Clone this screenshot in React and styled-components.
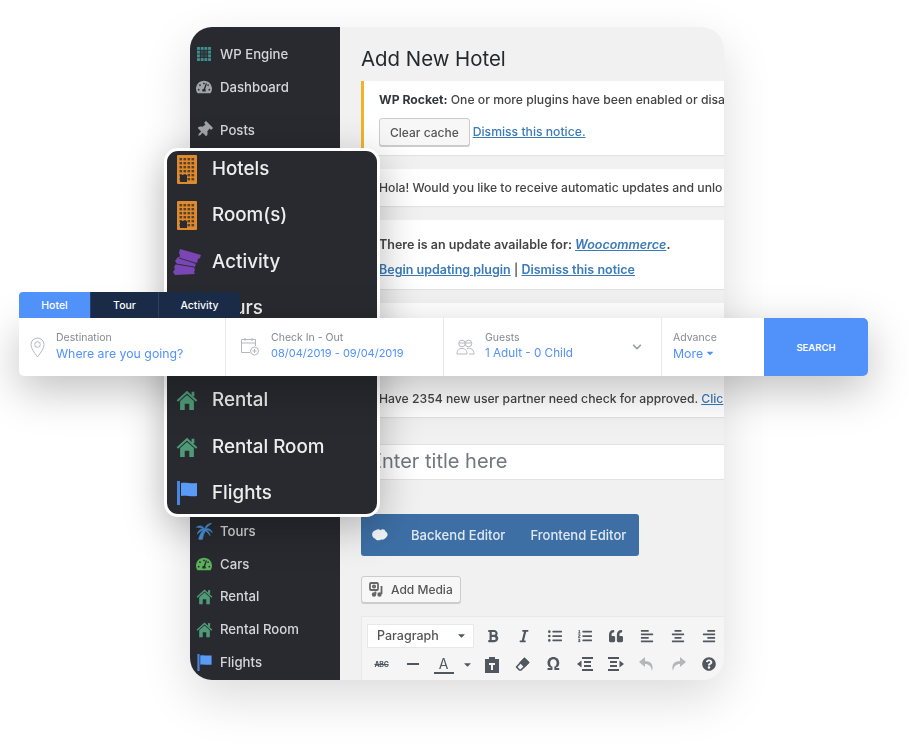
import React from 'react';
import styled, { createGlobalStyle } from 'styled-components';
import {
  FaBold,
  FaItalic,
  FaListUl,
  FaListOl,
  FaQuoteLeft,
  FaAlignLeft,
  FaAlignCenter,
  FaAlignRight,
  FaCaretDown,
  FaQuestionCircle,
  FaTachometerAlt,
  FaThumbtack,
  FaChevronDown,
} from 'react-icons/fa';

const GlobalStyle = createGlobalStyle`
  html, body {
    margin: 0;
    padding: 0;
    background: #fff;
  }
  body {
    font-family: Inter, "Liberation Sans", sans-serif;
  }
`;

const Page = styled.div`
  position: relative;
  width: 909px;
  height: 752px;
  overflow: hidden;
  background: #fff;
  padding: 27px 0 0 190px;
  box-sizing: border-box;
`;

const Screen = styled.div`
  display: flex;
  width: 534px;
  height: 653px;
  border-radius: 22px;
  overflow: hidden;
  box-shadow: 0 18px 50px rgba(0, 0, 0, 0.14);
  filter: blur(0.45px);
`;

const Sidebar = styled.nav`
  display: flex;
  flex-direction: column;
  flex: 0 0 150px;
  background: #282a2f;
  padding: 10.6px 0 1.6px 4px;
  box-sizing: border-box;
`;

const SideGroup = styled.div`
  margin-top: ${(props) => props.$top || '0'};
`;

const SideRow = styled.div`
  display: flex;
  align-items: center;
  gap: 6px;
  height: 32.8px;
  font-size: 13.2px;
  font-weight: 500;
  color: #d4d6d9;
`;

const SideIcon = styled.span`
  display: flex;
  align-items: center;
  justify-content: center;
  width: 20px;
  height: 20px;
  color: ${(props) => props.$color || '#a0a5aa'};
  font-size: 16px;
`;

const Main = styled.main`
  flex: 1;
  min-width: 0;
  background: #f1f1f1;
  padding: 17px 0 0 21px;
  overflow: hidden;
`;

const Title = styled.h1`
  margin: 0 0 7px;
  font-size: 20.4px;
  line-height: 30px;
  font-weight: 400;
  color: #23282d;
  white-space: nowrap;
`;

const Notice = styled.div`
  display: flex;
  flex-direction: column;
  justify-content: ${(props) => (props.$end ? 'flex-end' : 'center')};
  gap: ${(props) => props.$gap || 8}px;
  height: ${(props) => props.$h}px;
  margin-bottom: 14px;
  padding: ${(props) => props.$pt || 0}px 0 ${(props) => (props.$end ? 8 : 0)}px ${(props) => (props.$warn ? 15 : 18)}px;
  box-sizing: border-box;
  background: #fff;
  border-left: ${(props) => (props.$warn ? '3px solid #f0b429' : '0')};
  box-shadow: 0 1px 1px rgba(0, 0, 0, 0.06);
  font-size: 12.2px;
  line-height: 20px;
  font-weight: 500;
  color: #444;
  white-space: nowrap;
  overflow: hidden;
`;

const NoticeLine = styled.div`
  display: flex;
  align-items: center;
  gap: 3px;
  font-weight: ${(props) => (props.$strong ? 600 : 500)};
  font-size: ${(props) => (props.$strong ? '12.5px' : 'inherit')};
`;

const NoticeLink = styled.a`
  color: #3a7ab8;
  text-decoration: underline;
  font-weight: ${(props) => (props.$bold ? 600 : 500)};
  font-size: ${(props) => (props.$bold ? '12.5px' : 'inherit')};
  font-style: ${(props) => (props.$italic ? 'italic' : 'normal')};
`;

const Strong = styled.strong`
  font-weight: 700;
  color: #32373c;
`;

const WpButton = styled.button`
  display: inline-flex;
  align-items: center;
  gap: 7px;
  height: ${(props) => props.$h || 28}px;
  padding: 0 ${(props) => props.$pad || 10}px;
  background: #f7f7f7;
  border: 1px solid #cccccc;
  border-radius: 3px;
  box-shadow: 0 1px 0 #cccccc;
  font: 500 12px Inter, sans-serif;
  color: #555;
`;

const TitleField = styled.div`
  height: 34px;
  margin: 27px 0 34px;
  padding-left: 8px;
  background: #fff;
  border: 1px solid #e2e2e2;
  border-right: 0;
  font-size: 20px;
  line-height: 33px;
  color: #72777c;
`;

const EditorTabs = styled.div`
  display: flex;
  align-items: center;
  width: 278px;
  height: 42px;
  margin-bottom: 20px;
  padding-left: 11px;
  box-sizing: border-box;
  background: #3d6fa5;
  border-radius: 3px;
  font-size: 13.1px;
  font-weight: 500;
  color: #dfe8f2;
`;

const EditorTab = styled.span`
  margin-left: ${(props) => props.$gap}px;
`;

const Toolbar = styled.div`
  height: 64px;
  margin-top: 13px;
  padding: 4px 0 0 4px;
  box-sizing: border-box;
  background: #f5f5f5;
  border-top: 1px solid #e8e8e8;
  border-left: 1px solid #e8e8e8;
  border-radius: 0 0 20px 0;
`;

const ToolRow = styled.div`
  display: flex;
  align-items: center;
  height: ${(props) => props.$h}px;
`;

const Select = styled.div`
  display: flex;
  align-items: center;
  justify-content: space-between;
  width: 108px;
  height: 24px;
  margin-left: 1px;
  margin-right: 3px;
  padding: 0 6px 0 9px;
  box-sizing: border-box;
  background: #fff;
  border: 1px solid #e8e8e8;
  font-size: 12.5px;
  font-weight: 500;
  color: #555;
`;

const Tool = styled.span`
  display: flex;
  align-items: center;
  justify-content: center;
  width: ${(props) => props.$w || 31}px;
  font-size: ${(props) => props.$size || 14}px;
  font-weight: ${(props) => (props.$bold ? 700 : 400)};
  color: ${(props) => props.$color || '#50575e'};
`;

const TinyText = styled.span`
  font-size: 7px;
  font-weight: 700;
  letter-spacing: -0.3px;
  text-decoration: line-through;
`;

const HrLine = styled.span`
  width: 12px;
  height: 2px;
  background: #50575e;
`;

const ColorA = styled.span`
  width: 20px;
  border-bottom: 2px solid #50575e;
  text-align: center;
  font-size: 14px;
  line-height: 17px;
`;

const FloatMenu = styled.div`
  position: absolute;
  left: 164px;
  top: 148px;
  width: 216px;
  height: 369px;
  box-sizing: border-box;
  background: #282a2f;
  border: 3px solid #fff;
  border-radius: 14px;
  box-shadow: 0 10px 40px rgba(0, 0, 0, 0.28);
  overflow: hidden;
`;

const FloatRow = styled.div`
  display: flex;
  align-items: flex-start;
  gap: 10px;
  height: 46.3px;
  padding: 4px 0 0 5px;
  box-sizing: border-box;
  font-size: 18.8px;
  line-height: 28px;
  font-weight: 500;
  color: #eceded;
  filter: blur(0.35px);
`;

const FloatIcon = styled.span`
  display: flex;
  align-items: center;
  justify-content: center;
  width: 30px;
  height: 28px;
`;

const SearchBox = styled.div`
  position: absolute;
  left: 19px;
  top: 292px;
  width: 849px;
  filter: blur(0.25px);
`;

const Tabs = styled.div`
  display: flex;
  width: 221px;
  height: 26px;
  border-radius: 4px 4px 0 0;
  overflow: hidden;
`;

const TabItem = styled.div`
  display: flex;
  align-items: center;
  justify-content: center;
  width: ${(props) => props.$w}px;
  background: ${(props) => (props.$active ? '#5191fa' : '#1a2b48')};
  border-left: ${(props) => (props.$active ? '0' : '1px solid #2b3f60')};
  box-sizing: border-box;
  font-size: 10.5px;
  font-weight: 500;
  color: #fff;
`;

const Form = styled.div`
  display: flex;
  height: 58px;
  background: #fff;
  border-radius: 0 0 5px 5px;
  box-shadow: 0 14px 44px rgba(0, 0, 0, 0.25);
`;

const Field = styled.div`
  position: relative;
  display: flex;
  align-items: center;
  gap: ${(props) => props.$gap}px;
  width: ${(props) => props.$w}px;
  padding-left: ${(props) => props.$pad}px;
  box-sizing: border-box;
  border-right: ${(props) => (props.$last ? '0' : '1px solid #e8e8e8')};
`;

const FieldText = styled.div`
  display: flex;
  flex-direction: column;
  padding-bottom: 2px;
  white-space: nowrap;
`;

const FieldLabel = styled.span`
  font-size: 10.5px;
  line-height: 14px;
  color: #858a91;
`;

const FieldValue = styled.span`
  display: flex;
  align-items: center;
  gap: 2px;
  font-size: ${(props) => props.$size || 12.3}px;
  line-height: 17px;
  color: #5191fa;
`;

const FieldChevron = styled.span`
  position: absolute;
  right: 19px;
  top: 24px;
  font-size: 10px;
  line-height: 10px;
  color: #9a9fa6;
`;

const SearchButton = styled.button`
  flex: 1;
  border: 0;
  background: #5191fa;
  border-radius: 0 5px 5px 0;
  font: 600 9.5px Inter, sans-serif;
  color: #fff;
`;

const Building = () => (
  <svg width="20" height="29" viewBox="0 0 20 29">
    <rect width="20" height="29" rx="1" fill="#e08a2e" />
    {[3, 7, 11, 15, 19, 23].map((y) =>
      [2.5, 6.5, 10.5, 14.5].map((x) => (
        <rect key={`${x}-${y}`} x={x} y={y} width="2.6" height="2.4" fill="#5a4128" />
      ))
    )}
    <rect x="3" y="20" width="7" height="7" fill="#2a2c31" />
  </svg>
);

const Tickets = () => (
  <svg width="28" height="26" viewBox="0 0 28 26" fill="#7a45b5">
    <path d="M7 0l21 6-1 3-2 1-1 4L6 9l1-3-1-2z" />
    <path d="M5 8l18 6-1 4L4 15l-2-3z" />
    <path d="M3 15l18 3 1 3-1 2 1 2-20 1-2-3 2-3-1-2z" />
    <path d="M6 9l17 5.500M3 15l18 3" stroke="#282a2f" strokeWidth="0.8" fill="none" />
  </svg>
);

const House = ({ size = 22 }) => (
  <svg width={size} height={size} viewBox="0 0 24 24" fill="#4f9b78">
    <path d="M4.500 13 12 6.500l7.500 6.500v10h-5v-7h-5v7h-5z" />
    <path d="M1.500 13 12 3.500 22.500 13" fill="none" stroke="#4f9b78" strokeWidth="2.200" />
    <rect x="17" y="3" width="3" height="5" />
  </svg>
);

const Flag = ({ w = 20, h = 24 }) => (
  <svg width={w} height={h} viewBox="0 0 20 24">
    <rect x="0" y="0" width="3" height="24" fill="#4a86e0" />
    <path d="M4 2c5-1 10 1 16 0v13c-6 1-11-1-16 0z" fill="#5a9bf5" />
  </svg>
);

const Palm = ({ size = 18 }) => (
  <svg width={size} height={size} viewBox="0 0 24 24" fill="#4a90d9" stroke="#4a90d9" strokeWidth="1" strokeLinejoin="round">
    <path d="M5 23c1-5 3-9 7-13l2.500 1c-3 4-4 8-4.500 12z" />
    <path d="M13 10C11 5 6 4 2 7c3-.500 7 .500 11 3z" />
    <path d="M13 10c-4-2-8 0-10 6 3-3 6-5 10-5z" />
    <path d="M13 10c1-5 4-8 9-8-3 2-6 4-8 8z" />
    <path d="M13 10c4-2 8-1 10 4-3-3-6-4-10-3z" />
    <path d="M14 11c3 0 5 3 6 7-2-3-4-5-6-6z" />
  </svg>
);

const WpEngine = () => (
  <svg width="14" height="14" viewBox="0 0 14 14" fill="#3f8f92">
    {[0, 3.700, 7.400, 11.100].map((y) =>
      [0, 3.700, 7.400, 11.100].map((x) => (
        <rect
          key={`${x}-${y}`}
          x={x}
          y={y}
          width="2.900"
          height="2.900"
          opacity={x > 0 && x < 11 && y > 0 && y < 11 ? 0.35 : 1}
        />
      ))
    )}
  </svg>
);

const PinIcon = () => (
  <svg width="15" height="21" viewBox="0 0 15 21" fill="none" stroke="#b4b8bd" strokeWidth="1">
    <path d="M7.500 20C4 15 1 11.500 1 7.500a6.500 6.500 0 0 1 13 0C14 11.500 11 15 7.500 20z" />
    <circle cx="7.500" cy="7.500" r="2.800" />
  </svg>
);

const CalendarIcon = () => (
  <svg width="20" height="20" viewBox="0 0 20 20" fill="none" stroke="#b4b8bd" strokeWidth="1">
    <path d="M10 15.500H1.500v-13h14V9" />
    <path d="M1.500 6h14M5 1v3M12 1v3" />
    <circle cx="14.500" cy="14" r="4" />
    <path d="M14.500 12v4M12.500 14h4" />
  </svg>
);

const GuestsIcon = () => (
  <svg width="19" height="16" viewBox="0 0 19 16" fill="none" stroke="#b4b8bd" strokeWidth="1">
    <circle cx="6" cy="4.500" r="3.300" />
    <circle cx="12.500" cy="4.500" r="3.300" />
    <path d="M3 4h6M9.500 4h6" />
    <path d="M1 15c0-4 2-5.500 5-5.500S11 11 11 15z" />
    <path d="M11 9.500c4-.8 7 1 7 5.500h-5" />
  </svg>
);

const MediaIcon = () => (
  <svg width="15" height="15" viewBox="0 0 15 15" fill="none" stroke="#666" strokeWidth="1.800">
    <rect x="1" y="1" width="8" height="7" rx="1" />
    <circle cx="5" cy="4.500" r="1.200" />
    <path d="M12.500 4v8" />
    <circle cx="10.500" cy="12.500" r="1.300" fill="#666" />
    <circle cx="5" cy="12.500" r="1.300" fill="#666" />
    <path d="M6.500 12V9.500" />
  </svg>
);

const CloudIcon = () => (
  <svg width="16" height="12" viewBox="0 0 16 12" fill="#f4f7fa">
    <path d="M4 1c2-1.300 3.500-.8 4.500.3C10-.3 13 0 13.500 2.500 15.500 3.500 16.500 6 14.500 8 13 10 11 11 9 10.500 7 12 4 11.500 3 9.500.5 9-.6 6 .6 3.500 1.300 2 2.500 1.500 4 1z" />
  </svg>
);

const PasteIcon = () => (
  <svg width="16" height="17" viewBox="0 0 16 17">
    <path d="M1 3h4V1h6v2h4v14H1z" fill="#50575e" />
    <path d="M5 7h6v2H9v5H7V9H5z" fill="#f5f5f5" />
  </svg>
);

const EraserIcon = () => (
  <svg width="15" height="15" viewBox="0 0 15 15" fill="none" stroke="#50575e" strokeWidth="1.600">
    <path d="M9.500 1.500 13.500 5.500 6 13H4.500L1.500 10z" strokeLinejoin="round" />
    <path d="M9.500 1.500 13.500 5.500 9.500 9.500 5.500 5.500z" fill="#50575e" />
  </svg>
);

const IndentIcon = ({ flip }) => (
  <svg
    width="16"
    height="14"
    viewBox="0 0 16 14"
    fill="#50575e"
    style={flip ? { transform: 'scaleX(-1)' } : undefined}
  >
    <path d="M5 0h11v2H5zM7 4h7v2H7zM7 8h7v2H7zM5 12h11v2H5z" />
    <path d="M0 7l4.500-3.500v7z" />
  </svg>
);

const ArrowIcon = ({ flip }) => (
  <svg
    width="16"
    height="16"
    viewBox="0 0 16 16"
    fill="#b4b7ba"
    style={flip ? { transform: 'scaleX(-1)' } : undefined}
  >
    <path d="M6 1 0 6l6 5V8c4 0 6 2 7 7 2-6-1-10-7-10z" />
  </svg>
);

const sideTop = [
  { label: 'WP Engine', icon: <WpEngine /> },
  { label: 'Dashboard', icon: <FaTachometerAlt /> },
];

const sideBottom = [
  { label: 'Tours', icon: <Palm /> },
  { label: 'Cars', icon: <FaTachometerAlt />, color: '#5bb35b' },
  { label: 'Rental', icon: <House size={17} /> },
  { label: 'Rental Room', icon: <House size={17} /> },
  { label: 'Flights', icon: <Flag w={15} h={17} /> },
];

const floatItems = [
  { label: 'Hotels', icon: <Building /> },
  { label: 'Room(s)', icon: <Building /> },
  { label: 'Activity', icon: <Tickets /> },
  { label: 'Tours', icon: <Palm size={26} /> },
  { label: 'Cars', icon: <FaTachometerAlt color="#5bb35b" size={24} /> },
  { label: 'Rental', icon: <House /> },
  { label: 'Rental Room', icon: <House /> },
  { label: 'Flights', icon: <Flag /> },
];

export default function App() {
  return (
    <Page>
      <GlobalStyle />
      <Screen>
        <Sidebar>
          <SideGroup>
            {sideTop.map((item) => (
              <SideRow key={item.label}>
                <SideIcon>{item.icon}</SideIcon>
                {item.label}
              </SideRow>
            ))}
          </SideGroup>
          <SideGroup $top="10px">
            <SideRow>
              <SideIcon>
                <FaThumbtack style={{ transform: 'rotate(45deg)' }} />
              </SideIcon>
              Posts
            </SideRow>
          </SideGroup>
          <SideGroup $top="auto">
            {sideBottom.map((item) => (
              <SideRow key={item.label}>
                <SideIcon $color={item.color}>{item.icon}</SideIcon>
                {item.label}
              </SideRow>
            ))}
          </SideGroup>
        </Sidebar>

        <Main>
          <Title>Add New Hotel</Title>
          <Notice $h={74} $warn>
            <NoticeLine>
              <span>
                <Strong>WP Rocket:</Strong> One or more plugins have been enabled or disa
              </span>
            </NoticeLine>
            <NoticeLine>
              <WpButton>Clear cache</WpButton>
              <NoticeLink>Dismiss this notice.</NoticeLink>
            </NoticeLine>
          </Notice>
          <Notice $h={37}>
            <NoticeLine>Hola! Would you like to receive automatic updates and unlo</NoticeLine>
          </Notice>
          <Notice $h={69} $gap={5} $pt={6}>
            <NoticeLine $strong>
              <span>
                There is an update available for: <NoticeLink $bold $italic>Woocommerce</NoticeLink>.
              </span>
            </NoticeLine>
            <NoticeLine>
              <span>
                <NoticeLink $bold>Begin updating plugin</NoticeLink> | <NoticeLink $bold>Dismiss this notice</NoticeLink>
              </span>
            </NoticeLine>
          </Notice>
          <Notice $h={114} $end>
            <NoticeLine>
              <span>
                Have 2354 new user partner need check for approved. <NoticeLink>Clic</NoticeLink>
              </span>
            </NoticeLine>
          </Notice>
          <TitleField>Enter title here</TitleField>
          <EditorTabs>
            <CloudIcon />
            <EditorTab $gap={23}>Backend Editor</EditorTab>
            <EditorTab $gap={25}>Frontend Editor</EditorTab>
          </EditorTabs>
          <WpButton $h={27} $pad={7}>
            <MediaIcon />
            Add Media
          </WpButton>
          <Toolbar>
            <ToolRow $h={29}>
              <Select>
                Paragraph
                <FaCaretDown size={11} color="#50575e" />
              </Select>
              <Tool><FaBold /></Tool>
              <Tool><FaItalic /></Tool>
              <Tool><FaListUl /></Tool>
              <Tool><FaListOl /></Tool>
              <Tool><FaQuoteLeft /></Tool>
              <Tool><FaAlignLeft /></Tool>
              <Tool><FaAlignCenter /></Tool>
              <Tool><FaAlignRight /></Tool>
            </ToolRow>
            <ToolRow $h={28}>
              <Tool><TinyText>ABC</TinyText></Tool>
              <Tool><HrLine /></Tool>
              <Tool><ColorA>A</ColorA></Tool>
              <Tool $w={17} $size={11}><FaCaretDown /></Tool>
              <Tool><PasteIcon /></Tool>
              <Tool><EraserIcon /></Tool>
              <Tool $size={17} $bold>Ω</Tool>
              <Tool><IndentIcon /></Tool>
              <Tool><IndentIcon flip /></Tool>
              <Tool><ArrowIcon /></Tool>
              <Tool><ArrowIcon flip /></Tool>
              <Tool><FaQuestionCircle /></Tool>
            </ToolRow>
          </Toolbar>
        </Main>
      </Screen>

      <FloatMenu>
        {floatItems.map((item) => (
          <FloatRow key={item.label}>
            <FloatIcon>{item.icon}</FloatIcon>
            {item.label}
          </FloatRow>
        ))}
      </FloatMenu>

      <SearchBox>
        <Tabs>
          <TabItem $active $w={71}>Hotel</TabItem>
          <TabItem $w={68}>Tour</TabItem>
          <TabItem $w={82}>Activity</TabItem>
        </Tabs>
        <Form>
          <Field $w={207} $pad={11} $gap={11}>
            <PinIcon />
            <FieldText>
              <FieldLabel>Destination</FieldLabel>
              <FieldValue>Where are you going?</FieldValue>
            </FieldText>
          </Field>
          <Field $w={218} $pad={14} $gap={11}>
            <CalendarIcon />
            <FieldText>
              <FieldLabel>Check In - Out</FieldLabel>
              <FieldValue $size={11}>08/04/2019 - 09/04/2019</FieldValue>
            </FieldText>
          </Field>
          <Field $w={218} $pad={12} $gap={10}>
            <GuestsIcon />
            <FieldText>
              <FieldLabel>Guests</FieldLabel>
              <FieldValue $size={11.7}>1 Adult - 0 Child</FieldValue>
            </FieldText>
            <FieldChevron><FaChevronDown /></FieldChevron>
          </Field>
          <Field $w={102} $pad={11} $gap={0} $last>
            <FieldText>
              <FieldLabel>Advance</FieldLabel>
              <FieldValue>More <FaCaretDown size={10} /></FieldValue>
            </FieldText>
          </Field>
          <SearchButton>SEARCH</SearchButton>
        </Form>
      </SearchBox>
    </Page>
  );
}
